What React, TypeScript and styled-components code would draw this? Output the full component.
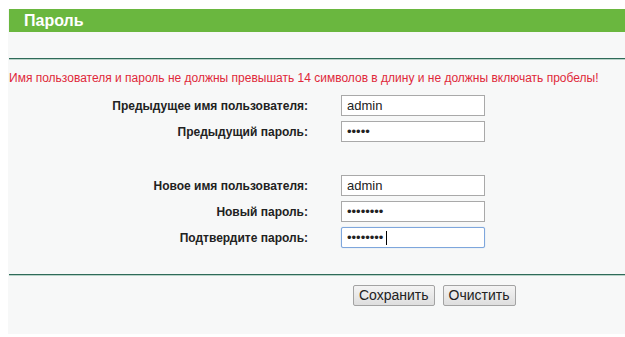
import { FC } from "react"
import styled, { createGlobalStyle } from 'styled-components';

const GlobalStyle = createGlobalStyle`
    html, body {
        margin: 0;
        padding: 0;
        background: #fff;
    }
    body {
        font-family: "Liberation Sans", Arial, sans-serif;
    }
`

type TField = {
    label: string
    value: string
    password?: boolean
    focused?: boolean
}

const oldFields: TField[] = [
    { label: 'Предыдущее имя пользователя:', value: 'admin' },
    { label: 'Предыдущий пароль:', value: '12345', password: true },
]

const newFields: TField[] = [
    { label: 'Новое имя пользователя:', value: 'admin' },
    { label: 'Новый пароль:', value: '12345678', password: true },
    { label: 'Подтвердите пароль:', value: '12345678', password: true, focused: true },
]

const FieldRows: FC<{ fields: TField[] }> = ({ fields }) => (
    <FormGrid>
        {fields.map((f) => (
            <FieldRow key={f.label}>
                <Label>{f.label}</Label>
                <InputWrap>
                    <TextInput
                        type={f.password ? 'password' : 'text'}
                        defaultValue={f.value}
                        $focused={f.focused}
                    />
                    {f.focused && <Caret />}
                </InputWrap>
            </FieldRow>
        ))}
    </FormGrid>
)

export default function App() {
    return (
        <Page>
            <GlobalStyle />
            <Panel>
                <Header>Пароль</Header>
                <HeaderSpace />
                <Divider />
                <Warning>
                    Имя пользователя и пароль не должны превышать 14 символов в длину и не должны включать пробелы!
                </Warning>
                <FieldRows fields={oldFields} />
                <GroupGap />
                <FieldRows fields={newFields} />
                <Divider $bottom />
                <ButtonRow>
                    <Button type="button">Сохранить</Button>
                    <Button type="button">Очистить</Button>
                </ButtonRow>
            </Panel>
        </Page>
    )
}

const Page = styled.div`
    width: 625px;
    height: 337px;
    padding: 9px 0 0 8px;
    box-sizing: border-box;
    overflow: hidden;
`

const Panel = styled.div`
    background: #f7f8f8;
    height: 325px;
    display: flex;
    flex-direction: column;
`

const Header = styled.div`
    height: 23px;
    background: #6ab73f;
    color: #fff;
    font-weight: bold;
    font-size: 16px;
    line-height: 23px;
    padding-left: 15px;
    margin-left: 1px;
`

const HeaderSpace = styled.div`
    height: 26px;
`

const Divider = styled.div<{ $bottom?: boolean }>`
    height: 1px;
    margin-left: 1px;
    background: #2f6b59;
    border-bottom: 1px solid #b9d3c9;
    margin-top: ${p => p.$bottom ? '26px' : '0'};
`

const Warning = styled.div`
    color: #e0283a;
    font-size: 12px;
    line-height: 14px;
    padding: 11px 0 0 1px;
    margin-bottom: 10px;
    white-space: nowrap;
`

const FormGrid = styled.div`
    display: flex;
    flex-direction: column;
    gap: 5px;
`

const FieldRow = styled.div`
    display: grid;
    grid-template-columns: 300px 144px;
    column-gap: 33px;
    align-items: center;
    height: 21px;
`

const Label = styled.div`
    text-align: right;
    font-size: 12px;
    font-weight: bold;
    color: #222;
    white-space: nowrap;
`

const InputWrap = styled.div`
    position: relative;
    height: 21px;
`

const TextInput = styled.input<{ $focused?: boolean }>`
    display: block;
    box-sizing: border-box;
    width: 144px;
    height: 21px;
    margin: 0;
    padding: 0 5px;
    font-family: "Liberation Sans", Arial, sans-serif;
    font-size: 13px;
    color: #222;
    background: #fff;
    border: 1px solid ${p => p.$focused ? '#7ea6dc' : '#a9a9a9'};
    border-radius: ${p => p.$focused ? '2px' : '0'};
    box-shadow: ${p => p.$focused ? '0 0 1px #9cc0ec' : 'none'};
    outline: none;
`

const Caret = styled.span`
    position: absolute;
    left: 45px;
    top: 4px;
    width: 1px;
    height: 14px;
    background: #000;
`

const GroupGap = styled.div`
    height: 33px;
`

const ButtonRow = styled.div`
    display: flex;
    gap: 8px;
    padding: 9px 0 0 345px;
`

const Button = styled.button`
    height: 21px;
    padding: 0 5px;
    font-family: "Liberation Sans", Arial, sans-serif;
    font-size: 14px;
    line-height: 19px;
    color: #222;
    background: linear-gradient(#f4f4f4, #dedede);
    border: 1px solid #a3a3a3;
    border-radius: 2px;
    cursor: pointer;
`
